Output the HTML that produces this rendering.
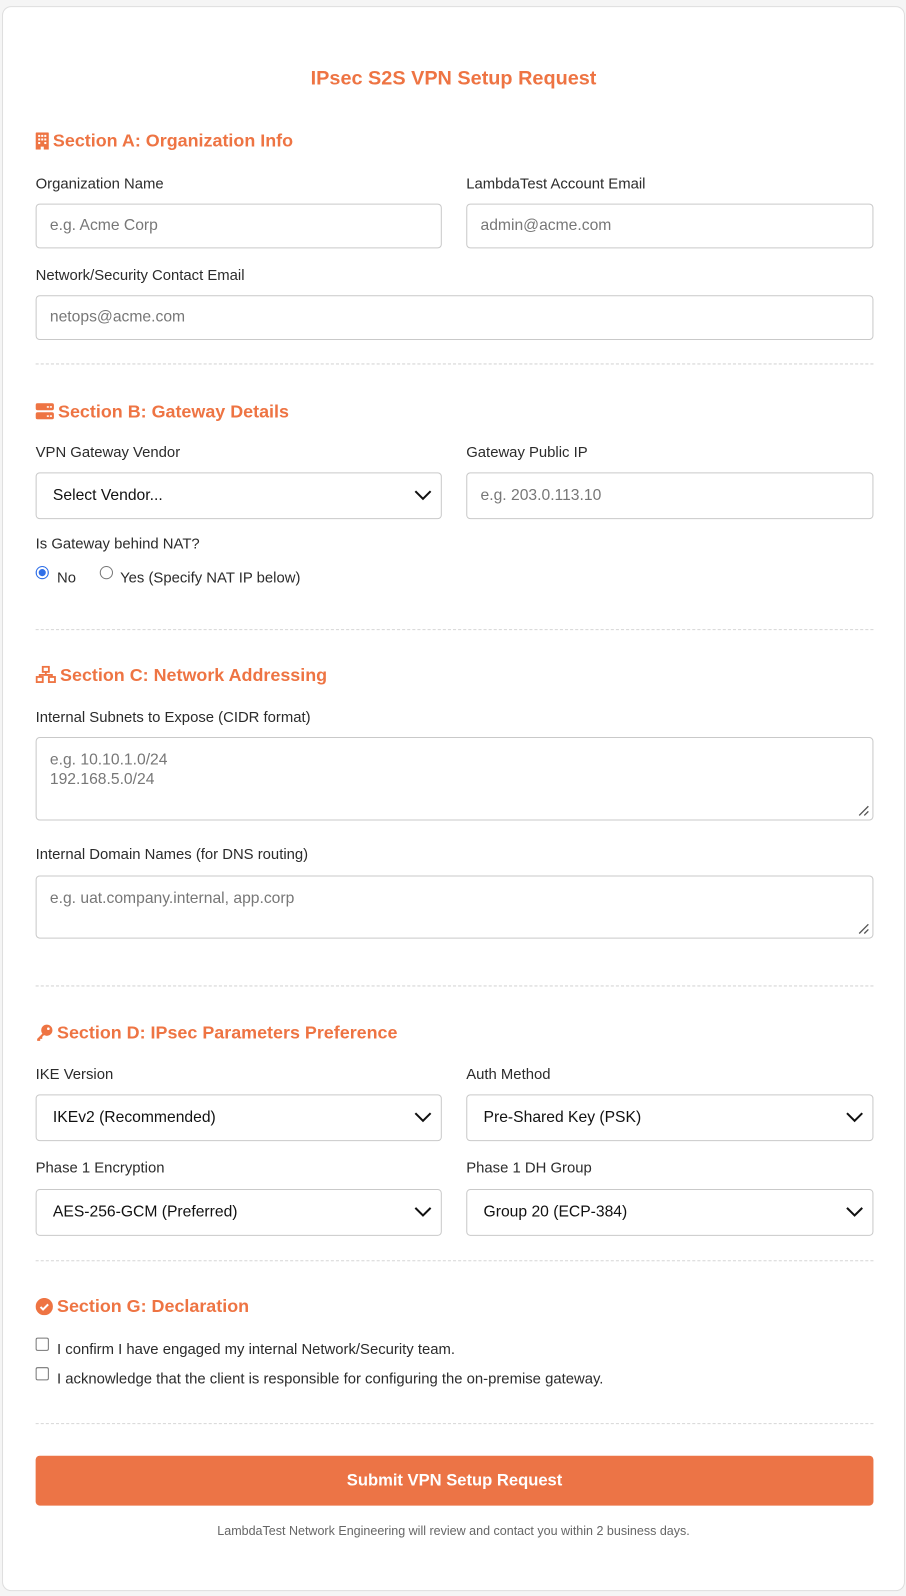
<!DOCTYPE html>
<html><head><meta charset="utf-8"><style>
*{box-sizing:border-box;margin:0;padding:0}
html,body{width:906px;height:1596px;background:#f5f5f5;font-family:"Liberation Sans",sans-serif;overflow:hidden}
body{position:relative}
#w{position:absolute;left:0;top:0;width:891px;height:1570px;transform:scale(1.018);transform-origin:0 0}
.card{position:absolute;left:2px;top:6px;width:887px;height:1557px;background:#fff;border:1px solid #dedede;border-radius:9px}
.a{position:absolute}
.t{left:0;width:891px;text-align:center;top:66px;font-size:19.5px;font-weight:bold;color:#ee7443}
.h{left:35px;font-size:17.6px;font-weight:bold;color:#ee7443;display:flex;align-items:center;gap:4px;height:22px}
.l{font-size:14.6px;color:#2b2b2b;left:35px}
.i{border:1px solid #c9c9c9;border-radius:4px;background:#fff;font-size:15.4px;color:#777;padding-left:13px;display:flex;align-items:center}
.s{color:#111;padding-left:16px}
.s svg{position:absolute;right:9px;top:50%;margin-top:-6px}
.hr{left:35px;width:823px;border-top:1px dashed #d6d6d6;height:0}
.L{left:35px;width:399px}.R{left:458px;width:400px}
.ta{align-items:flex-start;padding-top:12px;line-height:19px}
.grip{position:absolute;right:3px;bottom:3px}
.ck{position:absolute;width:13px;height:13px;border:1px solid #767676;border-radius:2px;background:#fff}
.rd{position:absolute;width:13px;height:13px;border:1px solid #767676;border-radius:50%;background:#fff}
.tx{font-size:14.6px;color:#2b2b2b}
</style></head><body><div id="w">
<div class="card"></div>
<div class="a t">IPsec S2S VPN Setup Request</div>

<div class="a h" style="top:127px"><svg width="13" height="17" viewBox="0 0 13 17"><path d="M0 1a1 1 0 011-1h11a1 1 0 011 1v16H8v-3H5v3H0z" fill="#ee7443"/><g fill="#fff"><rect x="2.5" y="2.5" width="2" height="2"/><rect x="5.5" y="2.5" width="2" height="2"/><rect x="8.5" y="2.5" width="2" height="2"/><rect x="2.5" y="6" width="2" height="2"/><rect x="5.5" y="6" width="2" height="2"/><rect x="8.5" y="6" width="2" height="2"/><rect x="2.5" y="9.5" width="2" height="2"/><rect x="8.5" y="9.5" width="2" height="2"/></g></svg>Section A: Organization Info</div>
<div class="a l" style="top:173px">Organization Name</div>
<div class="a l" style="top:173px;left:458px">LambdaTest Account Email</div>
<div class="a i L" style="top:200px;height:44px">e.g. Acme Corp</div>
<div class="a i R" style="top:200px;height:44px">admin@acme.com</div>
<div class="a l" style="top:263px">Network/Security Contact Email</div>
<div class="a i" style="left:35px;width:823px;top:290px;height:44px">netops@acme.com</div>
<div class="a hr" style="top:357px"></div>

<div class="a h" style="top:393px"><svg width="18" height="16" viewBox="0 0 18 16"><rect y="0" width="18" height="7" rx="2" fill="#ee7443"/><rect y="9" width="18" height="7" rx="2" fill="#ee7443"/><g fill="#fff"><rect x="11" y="3" width="2" height="1.5"/><rect x="14" y="3" width="2" height="1.5"/><rect x="11" y="12" width="2" height="1.5"/><rect x="14" y="12" width="2" height="1.5"/></g></svg>Section B: Gateway Details</div>
<div class="a l" style="top:437px">VPN Gateway Vendor</div>
<div class="a l" style="top:437px;left:458px">Gateway Public IP</div>
<div class="a i s L" style="top:464px;height:46px">Select Vendor...<svg width="17" height="11" viewBox="0 0 17 11"><path d="M1 1.5l7.5 7.5L16 1.5" stroke="#111" stroke-width="2" fill="none"/></svg></div>
<div class="a i R" style="top:464px;height:46px">e.g. 203.0.113.10</div>
<div class="a l" style="top:527px">Is Gateway behind NAT?</div>
<div class="rd" style="left:35px;top:556px;background:#2f6fe8;border-color:#2f6fe8;box-shadow:inset 0 0 0 2px #fff"></div>
<div class="a tx" style="left:56px;top:560px">No</div>
<div class="rd" style="left:98px;top:556px"></div>
<div class="a tx" style="left:118px;top:560px">Yes (Specify NAT IP below)</div>
<div class="a hr" style="top:618px"></div>

<div class="a h" style="top:652px"><svg width="20" height="18" viewBox="0 0 20 18"><g fill="none" stroke="#ee7443" stroke-width="1.8"><rect x="7" y="1" width="6" height="5"/><rect x="1" y="11" width="6" height="5"/><rect x="13" y="11" width="6" height="5"/><path d="M10 6v3M4 11V9h12v2"/></g></svg>Section C: Network Addressing</div>
<div class="a l" style="top:697px">Internal Subnets to Expose (CIDR format)</div>
<div class="a i ta" style="left:35px;width:823px;top:724px;height:82px">e.g. 10.10.1.0/24<br>192.168.5.0/24<svg class="grip" width="12" height="12" viewBox="0 0 12 12"><path d="M11 2L2 11M11 7L7 11" stroke="#555" stroke-width="1.3"/></svg></div>
<div class="a l" style="top:832px">Internal Domain Names (for DNS routing)</div>
<div class="a i ta" style="left:35px;width:823px;top:860px;height:62px">e.g. uat.company.internal, app.corp<svg class="grip" width="12" height="12" viewBox="0 0 12 12"><path d="M11 2L2 11M11 7L7 11" stroke="#555" stroke-width="1.3"/></svg></div>
<div class="a hr" style="top:968px"></div>

<div class="a h" style="top:1003px"><svg width="17" height="17" viewBox="0 0 17 17"><circle cx="11" cy="6" r="5.5" fill="#ee7443"/><path d="M7 9L1.5 14.5V16.5H4.5V14.5H6.5V12.5L9 10" fill="#ee7443"/><circle cx="12.5" cy="4.5" r="1.3" fill="#fff"/></svg>Section D: IPsec Parameters Preference</div>
<div class="a l" style="top:1048px">IKE Version</div>
<div class="a l" style="top:1048px;left:458px">Auth Method</div>
<div class="a i s L" style="top:1075px;height:46px">IKEv2 (Recommended)<svg width="17" height="11" viewBox="0 0 17 11"><path d="M1 1.5l7.5 7.5L16 1.5" stroke="#111" stroke-width="2" fill="none"/></svg></div>
<div class="a i s R" style="top:1075px;height:46px">Pre-Shared Key (PSK)<svg width="17" height="11" viewBox="0 0 17 11"><path d="M1 1.5l7.5 7.5L16 1.5" stroke="#111" stroke-width="2" fill="none"/></svg></div>
<div class="a l" style="top:1140px">Phase 1 Encryption</div>
<div class="a l" style="top:1140px;left:458px">Phase 1 DH Group</div>
<div class="a i s L" style="top:1168px;height:46px">AES-256-GCM (Preferred)<svg width="17" height="11" viewBox="0 0 17 11"><path d="M1 1.5l7.5 7.5L16 1.5" stroke="#111" stroke-width="2" fill="none"/></svg></div>
<div class="a i s R" style="top:1168px;height:46px">Group 20 (ECP-384)<svg width="17" height="11" viewBox="0 0 17 11"><path d="M1 1.5l7.5 7.5L16 1.5" stroke="#111" stroke-width="2" fill="none"/></svg></div>
<div class="a hr" style="top:1238px"></div>

<div class="a h" style="top:1272px"><svg width="17" height="17" viewBox="0 0 17 17"><circle cx="8.5" cy="8.5" r="8.5" fill="#ee7443"/><path d="M4.8 8.8l2.5 2.5 5-5" stroke="#fff" stroke-width="2" fill="none"/></svg>Section G: Declaration</div>
<div class="ck" style="left:35px;top:1314px"></div>
<div class="a tx" style="left:56px;top:1318px">I confirm I have engaged my internal Network/Security team.</div>
<div class="ck" style="left:35px;top:1343px"></div>
<div class="a tx" style="left:56px;top:1347px">I acknowledge that the client is responsible for configuring the on-premise gateway.</div>
<div class="a hr" style="top:1398px"></div>

<div class="a" style="left:35px;width:823px;top:1430px;height:49px;background:#ec7446;border-radius:4px;color:#fff;font-size:16.3px;font-weight:bold;display:flex;align-items:center;justify-content:center">Submit VPN Setup Request</div>
<div class="a" style="left:0;width:891px;top:1497px;text-align:center;font-size:12.3px;color:#666">LambdaTest Network Engineering will review and contact you within 2 business days.</div>
</div></body></html>
